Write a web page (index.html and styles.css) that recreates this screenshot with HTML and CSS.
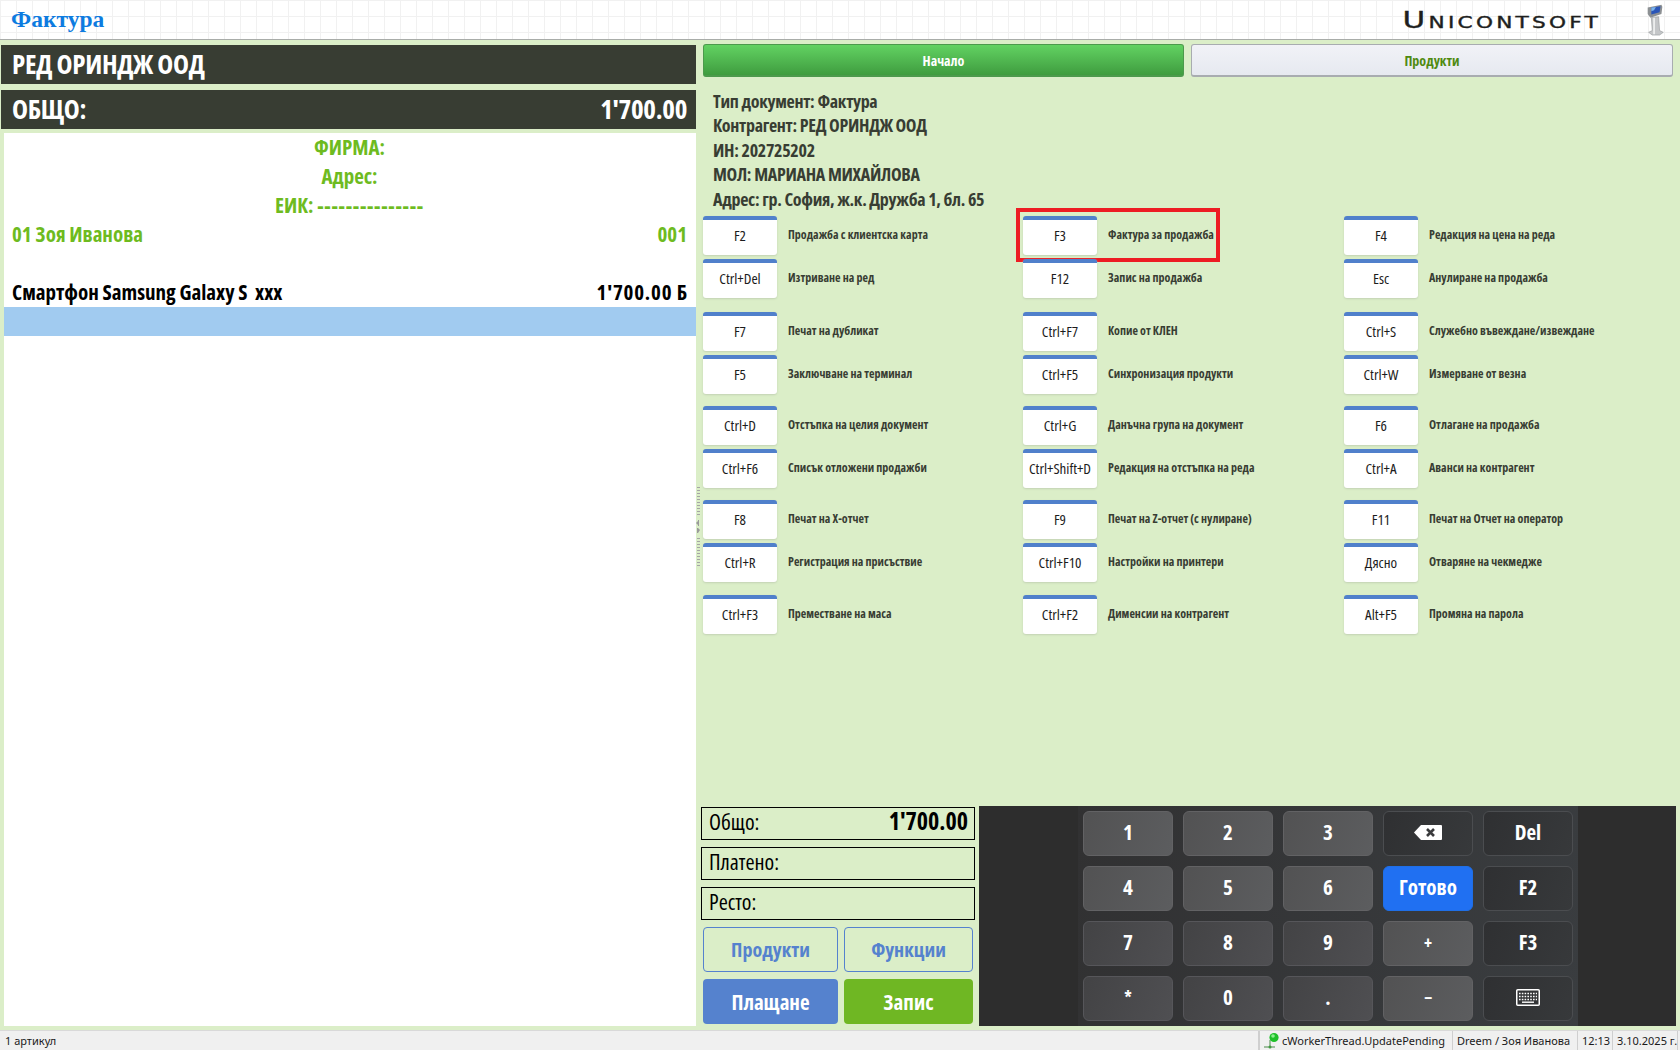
FILE: index.html
```html
<!DOCTYPE html>
<html lang="bg">
<head>
    <meta charset="UTF-8">
    <title>Фактура</title>
    <link rel="stylesheet" href="styles.css">
</head>
<body>
    <header class="top-bar">
        <div class="doc-title">Фактура</div>
        <div class="brand">
            <span class="brand-name">Unicontsoft</span>
            <svg class="kiosk" width="20" height="33" viewBox="0 0 20 36">
                <path d="M6 16 L14 15 L15 30 L19 32 L15 35 L7 35 L3 32 L7 30 Z" fill="#c4c6c8" stroke="#8f9294" stroke-width=".6"/>
                <path d="M9 16 L9 34" stroke="#eceded" stroke-width="2"/>
                <path d="M2 5 L17 2 L18 4 L17 12 L5 16 L2 12 Z" fill="#8c9093"/>
                <path d="M6 5 L16 3.5 L15 10 L6 12.5 Z" fill="#2a55b8"/>
                <path d="M6 5 L11 4.3 L9 8 L6 9 Z" fill="#7cb4ea"/>
            </svg>
        </div>
    </header>

    <main class="workspace">
        <section class="left-col">
            <div class="dark-bar">РЕД ОРИНДЖ ООД</div>
            <div class="dark-bar">
                <span>ОБЩО:</span>
                <span>1'700.00</span>
            </div>
            <div class="receipt">
                <div class="receipt-line line-center">ФИРМА:</div>
                <div class="receipt-line line-center">Адрес:</div>
                <div class="receipt-line line-center"><span>ЕИК: <span class="dashes">---------------</span></span></div>
                <div class="receipt-line">
                    <span>01 Зоя Иванова</span>
                    <span>001</span>
                </div>
                <div class="receipt-line"></div>
                <div class="receipt-line line-item">
                    <span>Смартфон Samsung Galaxy S&nbsp; xxx</span>
                    <span class="item-price">1'700.00 Б</span>
                </div>
                <div class="receipt-line line-selected"></div>
            </div>
        </section>

        <div class="splitter">
            <div class="grip">
                <div class="grip-dots"></div>
                <svg width="4" height="14" viewBox="0 0 4 14"><path d="M0 3 L2 1 L2 0 L3 0 L3 6 L2 6 L2 5 Z M1 8 L2 8 L4 10 L2 13 L1 13 Z" fill="#9a9a9a"/></svg>
                <div class="grip-dots"></div>
            </div>
        </div>

        <section class="right-col">
            <nav class="tabs">
                <div class="tab tab-active">Начало</div>
                <div class="tab">Продукти</div>
            </nav>

            <div class="doc-info">
                <div>Тип документ: Фактура</div>
                <div>Контрагент: РЕД ОРИНДЖ ООД</div>
                <div>ИН: 202725202</div>
                <div>МОЛ: МАРИАНА МИХАЙЛОВА</div>
                <div>Адрес: гр. София, ж.к. Дружба 1, бл. 65</div>
            </div>

            <div class="shortcuts">
                <div class="shortcut"><div class="key">F2</div><div class="key-label">Продажба с клиентска карта</div></div>
                <div class="shortcut shortcut-marked"><div class="key">F3</div><div class="key-label">Фактура за продажба</div><div class="red-frame"></div></div>
                <div class="shortcut"><div class="key">F4</div><div class="key-label">Редакция на цена на реда</div></div>

                <div class="shortcut group-first"><div class="key">Ctrl+Del</div><div class="key-label">Изтриване на ред</div></div>
                <div class="shortcut group-first"><div class="key">F12</div><div class="key-label">Запис на продажба</div></div>
                <div class="shortcut group-first"><div class="key">Esc</div><div class="key-label">Анулиране на продажба</div></div>

                <div class="shortcut"><div class="key">F7</div><div class="key-label">Печат на дубликат</div></div>
                <div class="shortcut"><div class="key">Ctrl+F7</div><div class="key-label">Копие от КЛЕН</div></div>
                <div class="shortcut"><div class="key">Ctrl+S</div><div class="key-label">Служебно въвеждане/извеждане</div></div>

                <div class="shortcut group-end"><div class="key">F5</div><div class="key-label">Заключване на терминал</div></div>
                <div class="shortcut group-end"><div class="key">Ctrl+F5</div><div class="key-label">Синхронизация продукти</div></div>
                <div class="shortcut group-end"><div class="key">Ctrl+W</div><div class="key-label">Измерване от везна</div></div>

                <div class="shortcut"><div class="key">Ctrl+D</div><div class="key-label">Отстъпка на целия документ</div></div>
                <div class="shortcut"><div class="key">Ctrl+G</div><div class="key-label">Данъчна група на документ</div></div>
                <div class="shortcut"><div class="key">F6</div><div class="key-label">Отлагане на продажба</div></div>

                <div class="shortcut group-end"><div class="key">Ctrl+F6</div><div class="key-label">Списък отложени продажби</div></div>
                <div class="shortcut group-end"><div class="key">Ctrl+Shift+D</div><div class="key-label">Редакция на отстъпка на реда</div></div>
                <div class="shortcut group-end"><div class="key">Ctrl+A</div><div class="key-label">Аванси на контрагент</div></div>

                <div class="shortcut"><div class="key">F8</div><div class="key-label">Печат на X-отчет</div></div>
                <div class="shortcut"><div class="key">F9</div><div class="key-label">Печат на Z-отчет (с нулиране)</div></div>
                <div class="shortcut"><div class="key">F11</div><div class="key-label">Печат на Отчет на оператор</div></div>

                <div class="shortcut group-last"><div class="key">Ctrl+R</div><div class="key-label">Регистрация на присъствие</div></div>
                <div class="shortcut group-last"><div class="key">Ctrl+F10</div><div class="key-label">Настройки на принтери</div></div>
                <div class="shortcut group-last"><div class="key">Дясно</div><div class="key-label">Отваряне на чекмедже</div></div>

                <div class="shortcut"><div class="key">Ctrl+F3</div><div class="key-label">Преместване на маса</div></div>
                <div class="shortcut"><div class="key">Ctrl+F2</div><div class="key-label">Дименсии на контрагент</div></div>
                <div class="shortcut"><div class="key">Alt+F5</div><div class="key-label">Промяна на парола</div></div>
            </div>

            <div class="bottom-area">
                <div class="totals">
                    <div class="total-box"><span>Общо:</span><span class="total-value">1'700.00</span></div>
                    <div class="total-box"><span>Платено:</span></div>
                    <div class="total-box"><span>Ресто:</span></div>
                    <div class="action-buttons">
                        <div class="action action-outline">Продукти</div>
                        <div class="action action-outline action-narrow">Функции</div>
                        <div class="action action-blue">Плащане</div>
                        <div class="action action-green action-narrow">Запис</div>
                    </div>
                </div>
                <div class="keypad">
                    <div class="keypad-inner">
                        <div class="pad-key">1</div>
                        <div class="pad-key">2</div>
                        <div class="pad-key">3</div>
                        <div class="pad-key pad-dark">
                            <svg width="28" height="15" viewBox="0 0 28 15"><path d="M7 0 H27 Q28 0 28 1 V14 Q28 15 27 15 H7 L0 7.5 Z" fill="#fff"/><path d="M13 4 L20 11 M20 4 L13 11" stroke="#3a3b3d" stroke-width="2.6"/></svg>
                        </div>
                        <div class="pad-key pad-dark">Del</div>

                        <div class="pad-key">4</div>
                        <div class="pad-key">5</div>
                        <div class="pad-key">6</div>
                        <div class="pad-key pad-blue">Готово</div>
                        <div class="pad-key pad-dark">F2</div>

                        <div class="pad-key row-low">7</div>
                        <div class="pad-key row-low">8</div>
                        <div class="pad-key row-low">9</div>
                        <div class="pad-key pad-symbol">+</div>
                        <div class="pad-key pad-dark">F3</div>

                        <div class="pad-key row-low pad-symbol">*</div>
                        <div class="pad-key row-low">0</div>
                        <div class="pad-key row-low">.</div>
                        <div class="pad-key pad-symbol">−</div>
                        <div class="pad-key pad-dark">
                            <svg width="24" height="17" viewBox="0 0 24 17" fill="none"><rect x=".75" y=".75" width="22.5" height="15.5" rx="1" stroke="#fff" stroke-width="1.5"/><path d="M3 4.5 H21 M3 7.5 H21" stroke="#fff" stroke-width="1.6" stroke-dasharray="1.6 1.2"/><path d="M3 10.5 H21" stroke="#fff" stroke-width="1.6" stroke-dasharray="1.6 1.2"/><path d="M6 13.2 H18" stroke="#fff" stroke-width="1.4"/></svg>
                        </div>
                    </div>
                </div>
            </div>
        </section>
    </main>

    <footer class="status-bar">
        <div class="status-cell status-grow">1 артикул</div>
        <div class="status-cell status-worker">
            <svg class="status-icon" width="20" height="19" viewBox="0 0 20 19"><path d="M8 9 V16 M2 16 H13" stroke="#4d8a4d" stroke-width="1"/><circle cx="8" cy="16" r="1.5" fill="#3f9a3f"/><circle cx="12" cy="6.5" r="4.6" fill="#1fc02a"/><circle cx="11" cy="5" r="1.8" fill="#8bf08f"/></svg>
            <span>cWorkerThread.UpdatePending</span>
        </div>
        <div class="status-cell status-user">Dreem / Зоя Иванова</div>
        <div class="status-cell status-time">12:13</div>
        <div class="status-cell status-date">3.10.2025 г.</div>
    </footer>
</body>
</html>
```

FILE: styles.css
```css
/* base */
* {
    box-sizing: border-box;
}

html,
body {
    height: 100%;
}

body {
    margin: 0;
    display: flex;
    flex-direction: column;
    height: 1050px;
    overflow: hidden;
    background-color: #dbeec8;
    font-family: "Open Sans", "Noto Sans", sans-serif;
    font-stretch: 75%;
    color: #383d33;
}

/* top header */
.top-bar {
    display: flex;
    justify-content: space-between;
    align-items: center;
    height: 40px;
    padding: 0 15px 0 11px;
    border-bottom: 1px solid #a9aca9;
    background-color: #ffffff;
    background-image:
        linear-gradient(#f1f1f1 1px, transparent 1px),
        linear-gradient(90deg, #f1f1f1 1px, transparent 1px);
    background-size: 16px 16px;
}

.doc-title {
    font-family: "Liberation Serif", serif;
    font-stretch: normal;
    font-weight: 700;
    font-size: 23.5px;
    color: #0d7be0;
}

.brand {
    display: flex;
    align-items: center;
    gap: 44px;
}

.brand-name {
    display: inline-block;
    transform: scaleX(1.35);
    transform-origin: right center;
    font-family: "DejaVu Sans", sans-serif;
    font-stretch: normal;
    font-variant: small-caps;
    font-size: 23px;
    letter-spacing: 2.4px;
    color: #1e1f1e;
    -webkit-text-stroke: .4px #1e1f1e;
}

/* main split */
.workspace {
    display: flex;
    flex: 1;
    min-height: 0;
}

.left-col {
    display: flex;
    flex-direction: column;
    width: 696px;
    padding: 5px 0 4px 1px;
}

.dark-bar {
    display: flex;
    justify-content: space-between;
    align-items: center;
    flex: none;
    height: 39px;
    margin-bottom: 6px;
    padding: 0 9px 2px 11px;
    background-color: #383d33;
    color: #ffffff;
    font-weight: 700;
    font-size: 27px;
    letter-spacing: -.3px;
}

.receipt {
    flex: 1;
    margin: -2px 0 0 3px;
    background-color: #ffffff;
}

.receipt-line {
    display: flex;
    justify-content: space-between;
    align-items: center;
    height: 29px;
    padding: 0 9px 2px 8px;
    color: #6ebb1f;
    font-weight: 700;
    font-size: 21px;
}

.line-center {
    justify-content: center;
}

.dashes {
    letter-spacing: .7px;
}

.line-item {
    color: #000000;
}

.item-price {
    margin-right: -1px;
    letter-spacing: .8px;
}

.line-selected {
    background-color: #a1cbf0;
}

.splitter {
    display: flex;
    align-items: center;
    width: 7px;
}

.grip {
    display: flex;
    flex-direction: column;
    align-items: center;
    gap: 4px;
    width: 4px;
    margin-bottom: 16px;
}

.grip-dots {
    width: 3px;
    height: 29px;
    background-image: repeating-linear-gradient(#a5a5a5 0 1px, transparent 1px 3px);
}

/* right side */
.right-col {
    display: flex;
    flex-direction: column;
    flex: 1;
    min-width: 0;
    padding: 4px 7px 4px 0;
}

.tabs {
    display: grid;
    grid-template-columns: 481px 482px;
    gap: 7px;
}

.tab {
    display: flex;
    justify-content: center;
    align-items: center;
    height: 33px;
    border: 1px solid #a8acb0;
    border-bottom-width: 2px;
    border-radius: 3px;
    background: linear-gradient(#f1f2f7, #e6e9f0);
    color: #4f8a10;
    font-weight: 700;
    font-size: 14px;
}

.tab-active {
    border-color: #4c9a4c;
    background: linear-gradient(#62d262, #3f9c3f);
    color: #ffffff;
}

.doc-info {
    padding: 12px 0 5px 10px;
    line-height: 24.4px;
    font-weight: 700;
    font-size: 18px;
    letter-spacing: -.3px;
}

.shortcuts {
    display: grid;
    grid-template-columns: 320px 321px 1fr;
    align-content: start;
    flex: 1;
}

.shortcut {
    position: relative;
    display: flex;
    align-items: flex-start;
    height: 43px;
}

.group-first {
    height: 53px;
}

.group-end {
    height: 51px;
}

.group-last {
    height: 52px;
}

.key {
    display: flex;
    justify-content: center;
    align-items: center;
    flex: none;
    width: 74px;
    height: 39px;
    padding-bottom: 6px;
    border-top: 4px solid #5080cb;
    border-radius: 3px;
    background-color: #ffffff;
    box-shadow: 0 1px 2px #c2d1b4;
    color: #1c1c1c;
    font-size: 15px;
}

.key-label {
    margin: 10px 0 0 11px;
    font-weight: 700;
    font-size: 12px;
}

.red-frame {
    position: absolute;
    top: -8px;
    left: -7px;
    width: 204px;
    height: 54px;
    border: 4px solid #ed1c24;
}

/* bottom totals and keypad */
.bottom-area {
    display: flex;
    flex: none;
    margin: 0 -3px 0 -7px;
}

.totals {
    display: flex;
    flex-direction: column;
    gap: 7px;
    width: 283px;
    padding: 1px 4px 0 5px;
}

.total-box {
    display: flex;
    justify-content: space-between;
    height: 33px;
    padding: 0 6px 0 7px;
    border: 1px solid #000000;
    color: #000000;
    font-size: 22px;
    line-height: 26px;
}

.total-value {
    font-weight: 700;
    font-size: 24px;
}

.action-buttons {
    display: grid;
    grid-template-columns: 135px 129px;
    grid-auto-rows: 45px;
    gap: 7px 6px;
    padding-left: 2px;
}

.action {
    display: flex;
    justify-content: center;
    align-items: center;
    border-radius: 4px;
    font-weight: 700;
    font-size: 21px;
}

.action-outline {
    border: 1px solid #5582ce;
    color: #5582ce;
    font-size: 20px;
}

.action-blue {
    background-color: #5582ce;
    color: #ffffff;
}

.action-green {
    background-color: #6fb723;
    color: #ffffff;
}

.keypad {
    display: flex;
    justify-content: center;
    flex: 1;
    height: 220px;
    padding-left: 1px;
    background-color: #2d2d2d;
}

.keypad-inner {
    display: grid;
    grid-template-columns: repeat(5, 90px);
    grid-auto-rows: 45px;
    gap: 10px;
    width: 500px;
    padding: 5px;
    background: linear-gradient(100deg, #313132, #3a3d40);
}

.pad-key {
    display: flex;
    justify-content: center;
    align-items: center;
    padding-bottom: 3px;
    border: 1px solid #626264;
    border-radius: 6px;
    background: linear-gradient(110deg, #525253, #5c5d5f);
    color: #ffffff;
    font-weight: 700;
    font-size: 21px;
}

.row-low {
    border-color: #56565a;
    background: linear-gradient(110deg, #434345, #4f4f52);
}

.pad-dark {
    border-color: #4b4d50;
    background: linear-gradient(110deg, #2f3032, #37393b);
}

.pad-blue {
    border-color: #1f6fe6;
    background-color: #2070f2;
    background-image: none;
}

.pad-symbol {
    font-size: 17px;
}

/* status bar */
.status-bar {
    display: flex;
    flex: none;
    height: 20px;
    border-top: 1px solid #d9d9d9;
    background-color: #f0f0f0;
    color: #1a1a1a;
    font-family: "Noto Sans", sans-serif;
    font-stretch: normal;
    font-size: 11px;
    line-height: 19px;
}

.status-cell {
    padding: 0 0 0 4px;
    border-right: 1px solid #cfcfcf;
    white-space: nowrap;
}

.status-grow {
    flex: 1;
    padding-left: 5px;
}

.status-worker {
    display: flex;
    width: 194px;
    padding-left: 2px;
    border-left: 1px solid #cfcfcf;
}

.status-icon {
    flex: none;
}

.status-user {
    width: 125px;
}

.status-time {
    width: 35px;
}

.status-date {
    width: 65px;
    margin-right: 2px;
}
```
